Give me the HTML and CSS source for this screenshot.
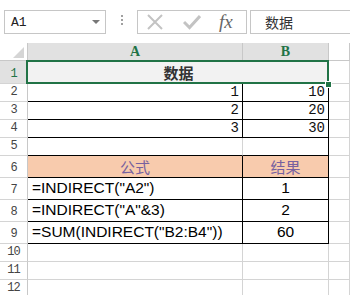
FILE: index.html
```html
<!DOCTYPE html>
<html lang="zh">
<head>
    <meta charset="UTF-8">
    <title>INDIRECT</title>
    <link rel="stylesheet" href="styles.css">
</head>
<body>
    <div class="toolbar">
        <div class="name-box">
            <span>A1</span>
            <span class="drop"></span>
        </div>
        <div class="dots"><i></i><i></i><i></i></div>
        <div class="fx-buttons">
            <svg class="btn-x" width="18" height="18" viewBox="0 0 18 18">
                <path d="M2 2 L16 16 M16 2 L2 16" stroke="#c3c3c3" stroke-width="2" fill="none"/>
            </svg>
            <svg class="btn-ok" width="18" height="18" viewBox="0 0 18 18">
                <path d="M1 9 L6.5 14.5 L17 3" stroke="#c3c3c3" stroke-width="3" fill="none"/>
            </svg>
            <span class="fx">fx</span>
        </div>
        <div class="formula">数据</div>
    </div>

    <div class="sheet">
        <div class="c corner"><span class="tri"></span></div>
        <div class="c hd sel">A</div>
        <div class="c hd sel">B</div>
        <div class="c hd"></div>

        <div class="c rh sel">1</div>
        <div class="c title bb">数据</div>
        <div class="c"></div>

        <div class="c rh">2</div>
        <div class="c num bb br">1</div>
        <div class="c num bb br">10</div>
        <div class="c"></div>

        <div class="c rh">3</div>
        <div class="c num bb br">2</div>
        <div class="c num bb br">20</div>
        <div class="c"></div>

        <div class="c rh">4</div>
        <div class="c num bb br">3</div>
        <div class="c num bb br">30</div>
        <div class="c"></div>

        <div class="c rh">5</div>
        <div class="c bb"></div>
        <div class="c bb br"></div>
        <div class="c"></div>

        <div class="c rh">6</div>
        <div class="c head bb br">公式</div>
        <div class="c head bb br">结果</div>
        <div class="c"></div>

        <div class="c rh">7</div>
        <div class="c txt bb br">=INDIRECT("A2")</div>
        <div class="c txt mid bb br">1</div>
        <div class="c"></div>

        <div class="c rh">8</div>
        <div class="c txt bb br">=INDIRECT("A"&amp;3)</div>
        <div class="c txt mid bb br">2</div>
        <div class="c"></div>

        <div class="c rh">9</div>
        <div class="c txt bb br">=SUM(INDIRECT("B2:B4"))</div>
        <div class="c txt mid bb br">60</div>
        <div class="c"></div>

        <div class="c rh">10</div>
        <div class="c"></div>
        <div class="c"></div>
        <div class="c"></div>

        <div class="c rh">11</div>
        <div class="c"></div>
        <div class="c"></div>
        <div class="c"></div>

        <div class="c rh">12</div>
        <div class="c"></div>
        <div class="c"></div>
        <div class="c"></div>

        <div class="selection"></div>
        <div class="handle"></div>
    </div>
</body>
</html>
```

FILE: styles.css
```css
body {
    margin: 0;
    background-color: #ffffff;
    font-family: 'Liberation Sans', Arial, sans-serif;
    overflow: hidden;
}

.toolbar {
    height: 43px;
    display: flex;
    align-items: flex-start;
    padding: 10px 0 0 4px;
    box-sizing: border-box;
}

.name-box {
    width: 102px;
    height: 24px;
    box-sizing: border-box;
    border: 1px solid #c6c6c6;
    display: flex;
    align-items: center;
    justify-content: space-between;
    padding: 0 5px 0 6px;
    font-family: 'Liberation Mono', monospace;
    font-size: 13px;
    color: #222222;
}

.drop {
    width: 0;
    height: 0;
    border-left: 4px solid transparent;
    border-right: 4px solid transparent;
    border-top: 4px solid #777777;
}

.dots {
    width: 31px;
    display: flex;
    flex-direction: column;
    align-items: center;
    gap: 2px;
    padding-top: 5px;
}

.dots i {
    width: 2px;
    height: 2px;
    background-color: #a0a0a0;
}

.fx-buttons {
    width: 110px;
    height: 24px;
    box-sizing: border-box;
    border: 1px solid #c6c6c6;
    display: flex;
    align-items: center;
    padding-left: 8px;
    gap: 19px;
}

.fx {
    font-family: 'Liberation Serif', serif;
    font-style: italic;
    font-size: 19px;
    color: #666666;
    margin-left: -1px;
}

.formula {
    flex: 1;
    height: 24px;
    margin-left: 3px;
    box-sizing: border-box;
    border: 1px solid #c6c6c6;
    border-right: none;
    padding-left: 14px;
    font-family: 'Noto Sans CJK SC', sans-serif;
    font-size: 14px;
    line-height: 22px;
    color: #333333;
}

.sheet {
    position: relative;
    display: grid;
    grid-template-columns: 28px 215px 86px 1fr;
    grid-template-rows: 18px 23px 18px 18px 18px 18px 22px 22px 22px 22px 18px 18px 18px;
}

.c {
    box-sizing: border-box;
    border-right: 1px solid #d4d4d4;
    border-bottom: 1px solid #d4d4d4;
    display: flex;
    align-items: flex-end;
    overflow: hidden;
    white-space: nowrap;
}

.corner {
    position: relative;
    border-color: #c8c8c8;
}

.tri {
    position: absolute;
    right: 3px;
    bottom: 2px;
    width: 0;
    height: 0;
    border-left: 11px solid transparent;
    border-bottom: 11px solid #d5d5d5;
}

.hd {
    justify-content: center;
    align-items: center;
    font-family: 'Liberation Serif', serif;
    font-weight: bold;
    font-size: 14px;
    color: #444444;
    border-right-color: #c8c8c8;
    border-bottom-color: #c8c8c8;
}

.rh {
    justify-content: center;
    padding-bottom: 2px;
    font-family: 'Liberation Mono', monospace;
    font-size: 12px;
    letter-spacing: -1px;
    color: #444444;
    border-right-color: #c8c8c8;
    border-bottom-color: #d4d4d4;
}

.sel {
    background-color: #e1e1e1;
    color: #217346;
}

.title {
    grid-column: span 2;
    justify-content: center;
    align-items: center;
    background-color: #f2f2f2;
    font-family: 'Noto Sans CJK SC', sans-serif;
    font-weight: bold;
    font-size: 15px;
    color: #333333;
    border-right: none;
}

.num {
    justify-content: flex-end;
    padding: 0 3px 1px 0;
    font-family: 'Liberation Mono', monospace;
    font-size: 14px;
    color: #111111;
}

.head {
    justify-content: center;
    align-items: center;
    background-color: #f8cbad;
    font-family: 'Noto Sans CJK SC', sans-serif;
    font-size: 15px;
    color: #76619f;
}

.txt {
    padding: 0 0 2px 4px;
    font-size: 15.5px;
    color: #000000;
}

.mid {
    justify-content: center;
    padding-left: 0;
}

.bb {
    border-bottom-color: #000000;
}

.br {
    border-right-color: #000000;
}

.selection {
    position: absolute;
    left: 26px;
    top: 17px;
    width: 303px;
    height: 24px;
    box-sizing: border-box;
    border: 2px solid #217346;
}

.handle {
    position: absolute;
    left: 325px;
    top: 38px;
    width: 5px;
    height: 5px;
    background-color: #217346;
    border: 1px solid #ffffff;
}
```
